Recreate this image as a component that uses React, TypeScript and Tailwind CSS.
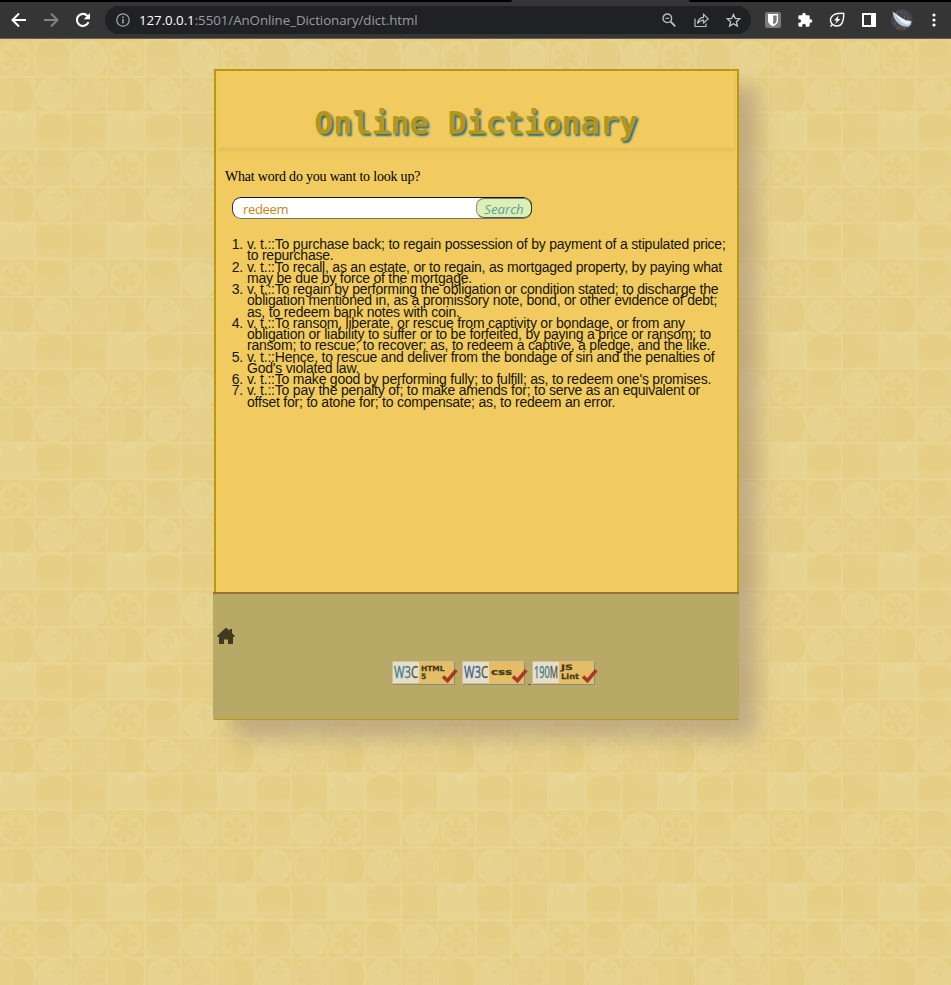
import React from "react";

const definitions: string[][] = [
  ["v. t.::To purchase back; to regain possession of by payment of a stipulated price;", "to repurchase."],
  ["v. t.::To recall, as an estate, or to regain, as mortgaged property, by paying what", "may be due by force of the mortgage."],
  [
    "v. t.::To regain by performing the obligation or condition stated; to discharge the",
    "obligation mentioned in, as a promissory note, bond, or other evidence of debt;",
    "as, to redeem bank notes with coin.",
  ],
  [
    "v. t.::To ransom, liberate, or rescue from captivity or bondage, or from any",
    "obligation or liability to suffer or to be forfeited, by paying a price or ransom; to",
    "ransom; to rescue; to recover; as, to redeem a captive, a pledge, and the like.",
  ],
  ["v. t.::Hence, to rescue and deliver from the bondage of sin and the penalties of", "God's violated law."],
  ["v. t.::To make good by performing fully; to fulfill; as, to redeem one's promises."],
  ["v. t.::To pay the penalty of; to make amends for; to serve as an equivalent or", "offset for; to atone for; to compensate; as, to redeem an error."],
];

function Flower({ x, y, r, fill }: { x: number; y: number; r: number; fill: string }) {
  return (
    <g transform={`translate(${x} ${y})`} fill={fill}>
      {[0, 62, 118, 180, 238, 302].map((a) => (
        <path
          key={a}
          transform={`rotate(${a})`}
          d={`M${-r * 0.1} 0 L${-r * 0.24} ${-r * 0.75} Q${-r * 0.2} ${-r} 0 ${-r} Q${r * 0.3} ${-r} ${r * 0.26} ${-r * 0.7} L${r * 0.1} 0Z`}
        />
      ))}
      <circle r={r * 0.27} />
    </g>
  );
}

function Wallpaper() {
  return (
    <svg className="absolute inset-0 h-full w-full" aria-hidden="true">
      <defs>
        <pattern id="tiles" width="110.2" height="110.2" patternUnits="userSpaceOnUse">
          <rect width="110.2" height="110.2" fill="#e6cf85" />
          <circle cx="15.5" cy="19" r="17" fill="#e8d38e" />
          <Flower x={15} y={19.5} r={13} fill="#e6cf85" />
          <rect x="34.500" width="36.300" height="37.500" fill="#e7d28c" />
          <circle cx="53" cy="19" r="17.800" fill="#e6d089" />
          <ellipse cx="52" cy="9.500" rx="14.500" ry="9" fill="#e5cd83" />
          <circle cx="89" cy="19.500" r="18" fill="#e8d491" />
          <Flower x={93} y={13} r={7} fill="#e6d18b" />

          <rect x="-3" y="37.500" width="37.300" height="36" fill="#e7d28c" />
          <circle cx="15.500" cy="55.500" r="17.800" fill="#e6d088" />
          <path d="M13 38 Q18 52 13 73 Q34 74 33.500 55 Q32 38 13 38Z" fill="#e5cd83" />
          <circle cx="53" cy="55.500" r="17.500" fill="#e8d490" />
          <Flower x={58} y={49} r={7.5} fill="#e6d18b" />
          <circle cx="89.500" cy="55.500" r="17.500" fill="#e7d28d" />
          <Flower x={89} y={55} r={14} fill="#e6d089" />

          <rect x="0" y="73.500" width="34.300" height="36.700" fill="#e8d491" />
          <rect x="107.300" y="73.500" width="3" height="36.700" fill="#e8d491" />
          <path d="M14.500 74 Q17 82 19.500 83 Q24 79 27 74Z M0 76 Q3 78 2 86 L0 87Z" fill="#e9d799" />
          <rect x="34.500" y="73.500" width="36.300" height="36.700" fill="#e8d38e" />
          <circle cx="53" cy="92" r="18" fill="#e7d18a" />
          <path d="M36 83 Q42 76 54 75 Q67 75 69.500 83 L69.500 96 Q54 105 38 98Z" fill="#e6ce85" />
          <path d="M71 74 H82 Q84 83 99 87 Q107 93 103 97 Q88 98 81 107 L78 110 H71Z" fill="#e6ce85" />
          <path d="M82 74 H107 V92 Q86 87 82 74Z M81 109 Q88 99 107 100V110H81Z" fill="#e6d089" />

          <path d="M34.500 0V110.200M70.800 0V110.200M107.300 0V110.200M0 37.500H110.200M0 73.400H110.200M0 109.900H110.200" stroke="#ead89a" strokeWidth="0.900" />
        </pattern>
      </defs>
      <rect width="100%" height="100%" fill="url(#tiles)" />
    </svg>
  );
}

function BrowserBar() {
  return (
    <header className="relative h-[39px] w-full border-b border-[#62605c] bg-[#353535] font-['Open_Sans','Noto_Sans',sans-serif]">
      <div className="flex h-[2px] justify-between">
        <div className="w-[512px] rounded-br bg-black" />
        <div className="w-[262px] rounded-bl bg-black" />
      </div>
      <div className="flex h-9 items-center">
        <svg className="ml-[11px] h-4 w-4 shrink-0" viewBox="0 0 16 16" fill="none" stroke="#fff" strokeWidth="2">
          <path d="M15 8H2M8 1.500 1.500 8 8 14.500" />
        </svg>
        <svg className="ml-4 h-4 w-4 shrink-0" viewBox="0 0 16 16" fill="none" stroke="#858585" strokeWidth="1.900">
          <path d="M1 8H14M8 1.500 14.500 8 8 14.500" />
        </svg>
        <svg className="ml-4 h-4 w-4 shrink-0" viewBox="0 0 16 16">
          <path d="M13.500 10.200A6 6 0 1 1 12.500 4" fill="none" stroke="#fff" strokeWidth="2.100" />
          <path d="M15 1v6.300H8.700Z" fill="#fff" />
        </svg>
        <div className="ml-[14px] flex h-7 w-[646px] shrink-0 items-center rounded-full bg-[#202124]">
          <svg className="ml-[11px] h-[14px] w-[14px] shrink-0" viewBox="0 0 14 14" fill="none" stroke="#a0a2a6" strokeWidth="1.300">
            <circle cx="7" cy="7" r="6.200" />
            <path d="M7 6v4.500M7 3.400v1.500" strokeWidth="1.600" />
          </svg>
          <div className="ml-[9px] w-[520px] whitespace-nowrap text-[13.300px] leading-7 tracking-[-0.050px] text-[#9a9ca0]">
            <span className="text-white">127.0.0.1</span>:5501/AnOnline_Dictionary/dict.html
          </div>
          <svg className="ml-[3px] h-[14px] w-[14px] shrink-0" viewBox="0 0 14 14" fill="none" stroke="#bbbdc0" strokeWidth="1.400">
            <circle cx="5.300" cy="5.300" r="4.300" />
            <path d="M8.500 8.500 13.300 13.300" strokeWidth="1.800" />
            <path d="M3.300 5.300h4" strokeWidth="1.100" />
          </svg>
          <svg className="ml-[18px] h-[15px] w-[15px] shrink-0" viewBox="0 0 15 15" fill="none" stroke="#bbbdc0" strokeWidth="1.200">
            <path d="M1 5.500V13.500H12V10.500M3.500 10.500Q4.500 4.500 9.500 4.300V1.300L14.300 5.800 9.500 10V7.200Q6 7.300 3.500 10.500Z" />
          </svg>
          <svg className="ml-[17px] h-[15px] w-[15px] shrink-0" viewBox="0 0 15 15" fill="none" stroke="#c4c6c9" strokeWidth="1.300">
            <path d="m7.500 1.500 1.800 4 4.400.4-3.300 2.900 1 4.300-3.900-2.300-3.900 2.300 1-4.300L1.300 5.900l4.400-.4Z" />
          </svg>
        </div>
        <svg className="ml-[14px] h-4 w-4 shrink-0" viewBox="0 0 16 16">
          <rect width="16" height="16" rx="2" fill="#7b7b7b" />
          <path d="M3 2h10v6.500q0 3.500-5 6-5-2.500-5-6Z" fill="#fff" />
          <path d="M8.200 3.500h3.500v5q0 2.200-3.500 4Z" fill="#777" />
        </svg>
        <svg className="ml-4 h-4 w-4 shrink-0" viewBox="0 0 24 24" fill="#fff">
          <path d="M20.500 11H19V7a2 2 0 0 0-2-2h-4V3.500a2.500 2.500 0 0 0-5 0V5H4a2 2 0 0 0-2 2v3.800h1.500a2.700 2.700 0 0 1 0 5.400H2V20a2 2 0 0 0 2 2h3.800v-1.500a2.700 2.700 0 0 1 5.400 0V22H17a2 2 0 0 0 2-2v-4h1.500a2.500 2.500 0 0 0 0-5Z" />
        </svg>
        <svg className="ml-4 h-4 w-4 shrink-0" viewBox="0 0 16 16" fill="none" stroke="#f5f5f5" strokeWidth="1.500">
          <path d="M14.700 1.400Q6 .8 2.900 4.400C-.1 8 2 13.300 7 14c6 .7 8-5.500 7.700-12.600ZM3.500 12.200 1.500 14.500" />
          <path d="M9.500 3.500 5 8.500h2.600L6.400 12 11.500 7H8.900Z" fill="#f5f5f5" stroke="none" />
        </svg>
        <svg className="ml-[17px] h-[14px] w-[14px] shrink-0" viewBox="0 0 14 14">
          <rect width="14" height="14" fill="#fff" />
          <rect x="2" y="2" width="7" height="10" fill="#353535" />
        </svg>
        <svg className="ml-[15px] h-[22px] w-[22px] shrink-0" viewBox="0 0 22 22">
          <circle cx="11" cy="11" r="10.700" fill="#49454c" />
          <path d="M5 4h1M10 3h1M14 5h1M17 9h1M13 8h1M4 14h1M8 18h1M13 19h1" stroke="#77727c" />
          <path d="M1.500 2.500Q2 8 5 12L8 15 11 17 17 18 20 15.500 20.500 12.500 18.500 11.500 15 11.500 9 8Z" fill="#b5cbd8" />
          <path d="M2 3 9 8 15 11.500 19.500 12.500 17 16 11 13.500Z" fill="#edf1f3" />
          <path d="M5 19h6" stroke="#5c5036" strokeWidth="2" />
          <path d="M13 17.500v2" stroke="#936e68" />
        </svg>
        <svg className="ml-[19px] h-4 w-1 shrink-0" viewBox="0 0 4 16" fill="#fff">
          <circle cx="2" cy="3" r="1.600" />
          <circle cx="2" cy="8" r="1.600" />
          <circle cx="2" cy="13" r="1.600" />
        </svg>
      </div>
    </header>
  );
}

function Badge({ mark, markFill, children }: { mark: string; markFill: string; children: React.ReactNode }) {
  return (
    <svg className="h-6 w-[66px] shrink-0" viewBox="0 0 66 24">
      <path d="M1 1H63V24H1Z" fill="#958b67" />
      <path d="M0 0H62V23H0Z" fill="#cdbf93" />
      <path d="M1 1H27V22H1Z" fill="#e5dfc9" />
      <path d="M27 1H61V22H27Z" fill="#e4bd64" />
      <text x="2" y="16.800" fontFamily="'Open Sans', sans-serif" fontSize="15.500" textLength="24" lengthAdjust="spacingAndGlyphs" fill={markFill} stroke={markFill} strokeWidth="0.400">
        {mark.slice(0, -1)}
        <tspan fill="#57584c" stroke="#57584c">{mark.slice(-1)}</tspan>
      </text>
      <g fontFamily="'DejaVu Sans', sans-serif" fontWeight="700" fill="#443a1d" stroke="#443a1d" strokeWidth="0.250">{children}</g>
      <path d="m51 15.500 4.500 4.200L64.300 9.200" fill="none" stroke="#a93824" strokeWidth="3.600" />
    </svg>
  );
}

export default function App() {
  return (
    <div className="flex h-[985px] w-[951px] flex-col overflow-hidden bg-[#e6d088]">
      <BrowserBar />
      <main className="relative flex-1">
        <Wallpaper />
        <div className="relative ml-[214px] mt-[30px] flex h-[651px] w-[525px] flex-col border-2 border-b border-[#b9990f] bg-[#f1cb5f] shadow-[18px_18px_20px_rgba(156,133,118,0.5)]">
          <h1 className="ml-px mr-[3px] h-[77px] pl-px pt-[30px] text-center font-['DejaVu_Sans_Mono',monospace] text-[31.600px] font-bold leading-[44px] text-[#b4971a] shadow-[1px_3px_3px_rgba(150,130,100,0.15)] [text-shadow:2px_2px_2px_#2f7078]">
            Online Dictionary
          </h1>
          <p className="ml-[9px] mt-[19px] font-['Liberation_Serif',serif] text-[14px] leading-5 tracking-[-0.200px] text-black">What word do you want to look up?</p>
          <div className="ml-4 mt-[10px] flex h-[22px] w-[300px] items-stretch rounded-[9px] border border-b-[#767676] border-l-[#333] border-r-[#333] border-t-[#151515] bg-white font-['Open_Sans','Noto_Sans',sans-serif] text-[13px]">
            <span className="flex-1 pl-[10px] leading-[22px] tracking-[-0.350px] text-[#c9851a]">redeem</span>
            <button className="-mr-px w-[56px] rounded-[8px] border border-b-[#555] border-l-[#8b9880] border-r-[#333] border-t-[#777] bg-[#dcf0b3] text-[13.200px] italic leading-[21px] text-[#5b9ea5]">Search</button>
          </div>
          <ol className="mt-5 font-['Liberation_Sans',sans-serif] text-[14px] leading-[11.250px] tracking-[-0.215px] text-[#15150b]">
            {definitions.map((lines, i) => (
              <li key={i} className="flex">
                <span className="w-[31px] shrink-0 pr-1 text-right">{i + 1}.</span>
                <div>
                  {lines.map((line) => (
                    <div key={line} className="whitespace-nowrap">{line}</div>
                  ))}
                </div>
              </li>
            ))}
          </ol>
          <footer className="-ml-[3px] mt-auto h-[127px] w-[526px] border-t-2 border-[#966f3a] bg-[#b9a966]">
            <svg className="ml-1 mt-[33px] h-[18px] w-[18px]" viewBox="0 0 18 18" fill="#403a20">
              <path d="M0 9 9 .5l3.500 3.300V2H15v4.200L18 9l-.8 1H16v7H11V12.500H7V17H2V10H.800Z" />
            </svg>
            <div className="ml-[179px] mt-4 flex gap-1">
              <Badge mark="W3C" markFill="#457d8e">
                <text x="29" y="9.500" fontSize="7" textLength="23.500" lengthAdjust="spacingAndGlyphs">HTML</text>
                <text x="29" y="18" fontSize="7.500">5</text>
              </Badge>
              <Badge mark="W3C" markFill="#416294">
                <text x="29" y="13.500" fontSize="8" textLength="21" lengthAdjust="spacingAndGlyphs">css</text>
              </Badge>
              <span className="-ml-1 h-px w-0 self-end">
                <span className="block h-px w-[3px] bg-[#69517a]" />
              </span>
              <Badge mark="190M" markFill="#457d8e">
                <text x="29" y="9.300" fontSize="7.500" textLength="12" lengthAdjust="spacingAndGlyphs">JS</text>
                <text x="29" y="18" fontSize="7.500" textLength="18" lengthAdjust="spacingAndGlyphs">Lint</text>
              </Badge>
            </div>
          </footer>
        </div>
      </main>
    </div>
  );
}
